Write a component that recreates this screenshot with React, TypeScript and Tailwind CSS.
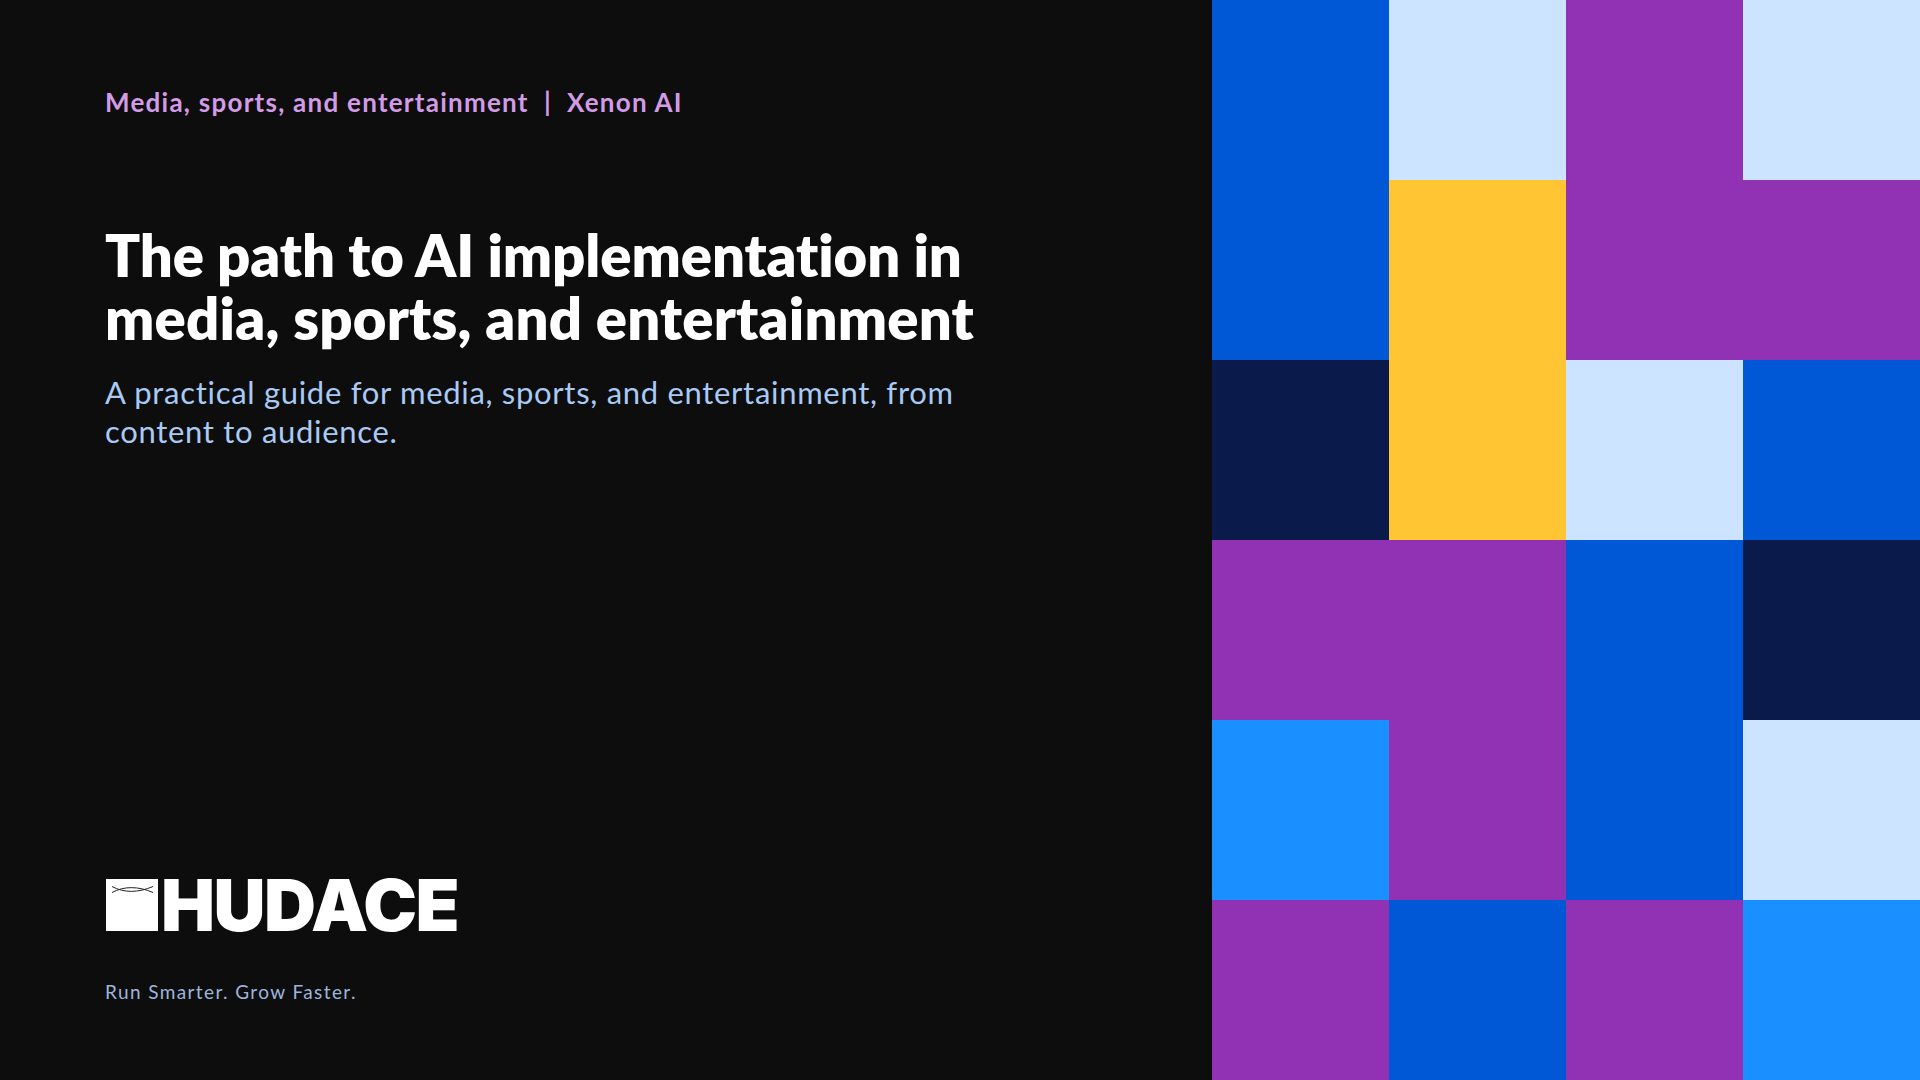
const cells = [
  'bg-[#0058d6]', 'bg-[#cce4ff]', 'bg-[#9131b4]', 'bg-[#cce4ff]',
  'bg-[#0058d6]', 'bg-[#ffc533]', 'bg-[#9131b4]', 'bg-[#9131b4]',
  'bg-[#0a1a4a]', 'bg-[#ffc533]', 'bg-[#cce4ff]', 'bg-[#0058d6]',
  'bg-[#9131b4]', 'bg-[#9131b4]', 'bg-[#0058d6]', 'bg-[#0a1a4a]',
  'bg-[#1a8fff]', 'bg-[#9131b4]', 'bg-[#0058d6]', 'bg-[#cce4ff]',
  'bg-[#9131b4]', 'bg-[#0058d6]', 'bg-[#9131b4]', 'bg-[#1a8fff]',
];

function LogoMark() {
  return (
    <div className="w-[52px] h-[52px] bg-white">
      <svg viewBox="0 0 52 52" className="w-full h-full">
        <path d="M6 7.5 C18 14 32 14 47 7.5 M6 13.5 C18 7 32 7 47 13.5" fill="none" stroke="#222" strokeWidth="1" />
      </svg>
    </div>
  );
}

export default function App() {
  return (
    <div className="flex w-full h-[1080px] bg-[#0d0d0d] font-['Lato',sans-serif] [font-variant-ligatures:none]">
      <div className="flex flex-col w-[1212px] pl-[105px]">
        <div className="mt-[85px] text-[26px] leading-[34px] font-bold tracking-[1.25px] text-[#d29be6] whitespace-pre">
          Media, sports, and entertainment{'  |  '}Xenon AI
        </div>
        <h1 className="mt-[104px] text-[58px] leading-[63px] font-extrabold text-white">
          <span className="block tracking-[-0.1px]">The path to AI implementation in</span>
          <span className="block tracking-[0.2px]">media, sports, and entertainment</span>
        </h1>
        <p className="mt-[24px] text-[31px] leading-[39px] tracking-[0.7px] text-[#a8caf5]">
          A practical guide for media, sports, and entertainment, from
          <br />
          content to audience.
        </p>
        <div className="mt-auto ml-px flex items-center gap-[3px]">
          <LogoMark />
          <span className="font-['Inter',sans-serif] font-black text-[72px] leading-[52px] tracking-[-1.5px] text-white">HUDACE</span>
        </div>
        <div className="mt-[49px] mb-[76px] text-[19px] leading-[24px] tracking-[1.4px] text-[#9db5dc]">
          Run Smarter. Grow Faster.
        </div>
      </div>
      <div className="grid grid-cols-4 grid-rows-6 w-[708px] h-[1080px]">
        {cells.map((c, i) => (
          <div key={i} className={c} />
        ))}
      </div>
    </div>
  );
}
